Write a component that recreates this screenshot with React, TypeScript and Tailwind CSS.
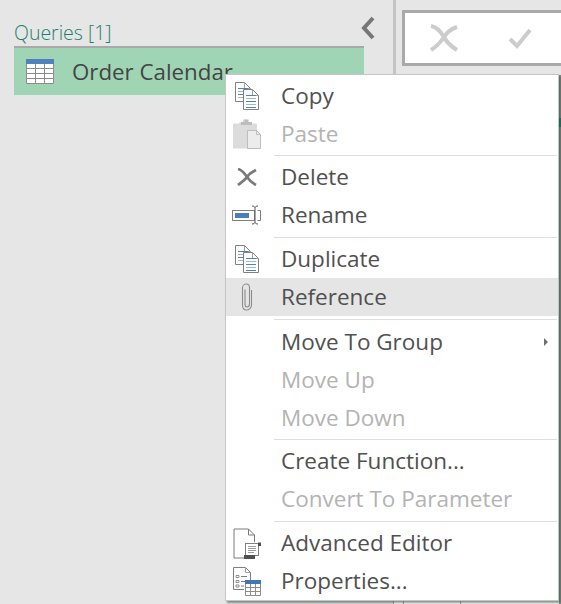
import React from "react";

const DocLines = ({ x, y, w, h, lines, color = "#4f81bd" }: { x: number; y: number; w: number; h: number; lines: number; color?: string }) => (
  <g>
    <path d={`M${x + 0.5} ${y + 0.5}H${x + w - 6.5}L${x + w - 0.5} ${y + 6.5}V${y + h - 0.5}H${x + 0.5}Z`} fill="#fff" stroke="#808080" />
    <path d={`M${x + w - 6.5} ${y + 0.5}V${y + 6.5}H${x + w - 0.5}`} fill="none" stroke="#a0a0a0" />
    {Array.from({ length: lines }).map((_, i) => (
      <path key={i} d={`M${x + 3} ${y + 6.5 + i * 3}H${x + w - 3}`} stroke={i % 2 ? "#9db8d6" : color} />
    ))}
  </g>
);

const CopyIcon = () => (
  <svg width="26" height="30" viewBox="0 0 26 30">
    <DocLines x={1} y={1} w={16} h={20} lines={4} />
    <DocLines x={9} y={8} w={16} h={21} lines={5} />
  </svg>
);

const PasteIcon = () => (
  <svg width="30" height="30" viewBox="0 0 30 30">
    <path d="M1 5a1 1 0 0 1 1-1h5V3h4V0h4v3h4v1h5a1 1 0 0 1 1 1v24H1Z" transform="translate(0 0.5)" fill="#dcdcdc" />
    <rect x="9" y="3" width="11" height="3" fill="#bdbdbd" />
    <rect x="12.5" y="0.5" width="4" height="4" fill="#bdbdbd" />
    <path d="M15.5 11.5H24.5L28.5 15.5V29.5H15.5Z" fill="#ececec" stroke="#bdbdbd" />
    <path d="M24.5 11.5V15.5H28.5" fill="none" stroke="#bdbdbd" />
  </svg>
);

const DeleteIcon = () => (
  <svg width="20" height="18" viewBox="0 0 20 18">
    <path d="M1 1C5 2 8 6 10 9C12 12 15 15 19 17M19 2C15 4 12 6 10 9C8 12 5 14 1 17" fill="none" stroke="#7a7a7a" strokeWidth="2.8" />
  </svg>
);

const RenameIcon = () => (
  <svg width="30" height="20" viewBox="0 0 30 20">
    <rect x="0.5" y="5.5" width="22" height="10" fill="#fff" stroke="#808080" />
    <rect x="3" y="8" width="14" height="5" fill="#4a7ebb" />
    <path d="M20 1C21.5 1 22.5 1.5 23 2.5C23.5 1.5 24.5 1 26 1M23 2.5V17.5M20 19C21.5 19 22.5 18.5 23 17.5C23.5 18.5 24.5 19 26 19" fill="none" stroke="#555" />
    <path d="M25.5 5.5H28.5V15.5H25.5" fill="none" stroke="#808080" />
  </svg>
);

const ClipIcon = () => (
  <svg width="14" height="28" viewBox="0 0 14 28">
    <path d="M5 6.5V21C5 23 5.5 24 7 24C8.5 24 9.5 23 9.5 21V5C9.5 2.5 8.5 1 6.5 1C4.5 1 2.5 2.5 2.5 5V22C2.5 25 4 27 6.5 27C9 27 11.5 25 11.5 22V7" fill="none" stroke="#8c8c8c" strokeWidth="1.1" />
  </svg>
);

const AdvancedIcon = () => (
  <svg width="28" height="31" viewBox="0 0 28 31">
    <path d="M15.5 1H1V30H12" fill="none" stroke="#7a7a7a" />
    <path d="M15.5 1L21.5 7V14M15.5 1V7H21.5" fill="none" stroke="#7a7a7a" />
    <rect x="12.5" y="15.5" width="13" height="12" fill="#fff" stroke="#808080" />
    <path d="M15 18.5H23M15 20.5H23M15 22.5H23M15 24.5H21" stroke="#9a9a9a" />
    <rect x="11" y="27" width="11" height="4" fill="#505050" />
    <rect x="25" y="14.5" width="3" height="3.5" fill="#505050" />
  </svg>
);

const PropsIcon = () => (
  <svg width="29" height="29" viewBox="0 0 29 29">
    <path d="M0.5 0.5H12.5L17.5 5.5V14M11 22.5H0.5V0.5" fill="#fff" stroke="#808080" />
    <path d="M12.5 0.5V5.5H17.5" fill="none" stroke="#a0a0a0" />
    <path d="M3 8.5H6V10.5H3ZM3 13.5H6V15.5H3ZM3 18H6V20H3Z" fill="#fff" stroke="#7a7a7a" strokeWidth="0.8" />
    <path d="M8 9.5H14M8 14.5H12M8 19H11" stroke="#808080" />
    <rect x="12" y="13" width="16" height="16" fill="#fff" />
    <rect x="12" y="13" width="16" height="4" fill="#3f78b5" />
    <path d="M12.5 17V28.5H27.5V17M12.5 20.5H27.5M12.5 24.5H27.5M17.5 17V28.5M22.5 17V28.5" fill="none" stroke="#8c8c8c" />
  </svg>
);

const TableIcon = () => (
  <svg width="28" height="25" viewBox="0 0 28 25">
    <rect x="0" y="0" width="28" height="5" fill="#4f81bd" />
    <path d="M0.5 5V24.5H27.5V5" fill="#fff" />
    <path d="M0.5 5V24.5H27.5V5M0.5 9.5H27.5M0.5 14.5H27.5M0.5 19.5H27.5M9.5 5V24.5M18.5 5V24.5" fill="none" stroke="#8c8c8c" />
  </svg>
);

type RowProps = { label: string; icon?: React.ReactNode; disabled?: boolean; active?: boolean; arrow?: boolean };

const Row = ({ label, icon, disabled, active, arrow }: RowProps) => (
  <div className={`flex h-[38px] items-center ${active ? "bg-[#e5e5e5]" : ""}`}>
    <div className="flex h-full w-[42px] shrink-0 items-center justify-center">{icon}</div>
    <span className={`flex-1 pb-[1px] pl-[13px] text-[22.5px] leading-[37px] ${disabled ? "text-[#b3b3b3]" : "text-[#505050]"}`}>{label}</span>
    {arrow && <span className="mr-[10px] h-0 w-0 border-y-[4px] border-l-[4px] border-y-transparent border-l-[#707070]" />}
  </div>
);

const Sep = ({ h }: { h: string }) => (
  <div className={`flex flex-col justify-center pl-[48px] pr-[1px] ${h}`}>
    <div className="h-[1px] bg-[#dedede]" />
  </div>
);

export default function App() {
  return (
    <div className="relative flex h-[604px] w-[561px] overflow-hidden bg-[#e6e6e6] font-['Open_Sans','Noto_Sans',sans-serif]">
      <div className="w-[393px] shrink-0 pl-[14px] pr-[29px] pt-[19px]">
        <div className="flex h-[27px] items-center text-[19.5px] font-light leading-[27px] text-[#1f7f6c]">
          Queries [1]
        </div>
        <div className="flex h-[49px] items-center border-t-[2px] border-[#a9a9a9] bg-[#9fd5b5] pl-[12px]">
          <TableIcon />
          <span className="ml-[18px] text-[22.3px] text-[#444444]">Order Calendar</span>
        </div>
      </div>
      <div className="h-[74px] w-[3px] shrink-0 bg-[#c4c4c4]" />
      <div className="flex-1 pl-[6px] pt-[10px]">
        <div className="flex h-[56px] items-center border-[3px] border-r-0 border-[#a9a9a9] bg-white pl-[24px]">
          <svg width="30" height="28" viewBox="0 0 30 28">
            <path d="M2 2C8 3 12 8 15 13C18 19 23 23 28 26M28 3C22 5 18 8 15 13C11 19 7 23 2 26" fill="none" stroke="#cccccc" strokeWidth="4" />
          </svg>
          <svg className="ml-[49px]" width="24" height="22" viewBox="0 0 24 22">
            <path d="M2 12L9 19L22 3" fill="none" stroke="#cccccc" strokeWidth="4" />
          </svg>
        </div>
      </div>

      <svg className="absolute left-[361px] top-[16px]" width="15" height="24" viewBox="0 0 15 24">
        <path d="M12 2L3 12L12 22" fill="none" stroke="#767676" strokeWidth="4" />
      </svg>

      {/* data grid peeking out behind the menu */}
      <div className="absolute left-[393px] top-[596px] flex h-[8px] w-[168px] bg-white">
        <div className="w-[10px] border-l border-[#a0a0a0]" />
        <div className="relative w-[57px] border-l border-[#a0a0a0]">
          <span className="absolute left-[19px] top-[3px] text-[20px] leading-[24px] text-[#333333]">18</span>
        </div>
        <div className="flex-1 border-l border-[#a0a0a0]" />
      </div>
      <div className="absolute left-[559px] top-[75px] h-[529px] w-[2px] bg-[#84918c]">
        <div className="mt-[43px] h-[9px] bg-[#00806a]" />
      </div>

      <div className="absolute left-[225px] top-[74px] w-[334px] border border-[#c6c6c6] bg-white pt-[2px] shadow-[2px_2px_2px_rgba(60,80,70,0.6)]">
        <Row label="Copy" icon={<CopyIcon />} />
        <Row label="Paste" disabled icon={<PasteIcon />} />
        <Sep h="h-[5px]" />
        <Row label="Delete" icon={<DeleteIcon />} />
        <Row label="Rename" icon={<RenameIcon />} />
        <Sep h="h-[6px]" />
        <Row label="Duplicate" icon={<CopyIcon />} />
        <Row label="Reference" active icon={<ClipIcon />} />
        <Sep h="h-[7px]" />
        <Row label="Move To Group" arrow />
        <Row label="Move Up" disabled />
        <Row label="Move Down" disabled />
        <Sep h="h-[5px]" />
        <Row label="Create Function..." />
        <Row label="Convert To Parameter" disabled />
        <Sep h="h-[6px]" />
        <Row label="Advanced Editor" icon={<AdvancedIcon />} />
        <Row label="Properties..." icon={<PropsIcon />} />
      </div>
    </div>
  );
}
